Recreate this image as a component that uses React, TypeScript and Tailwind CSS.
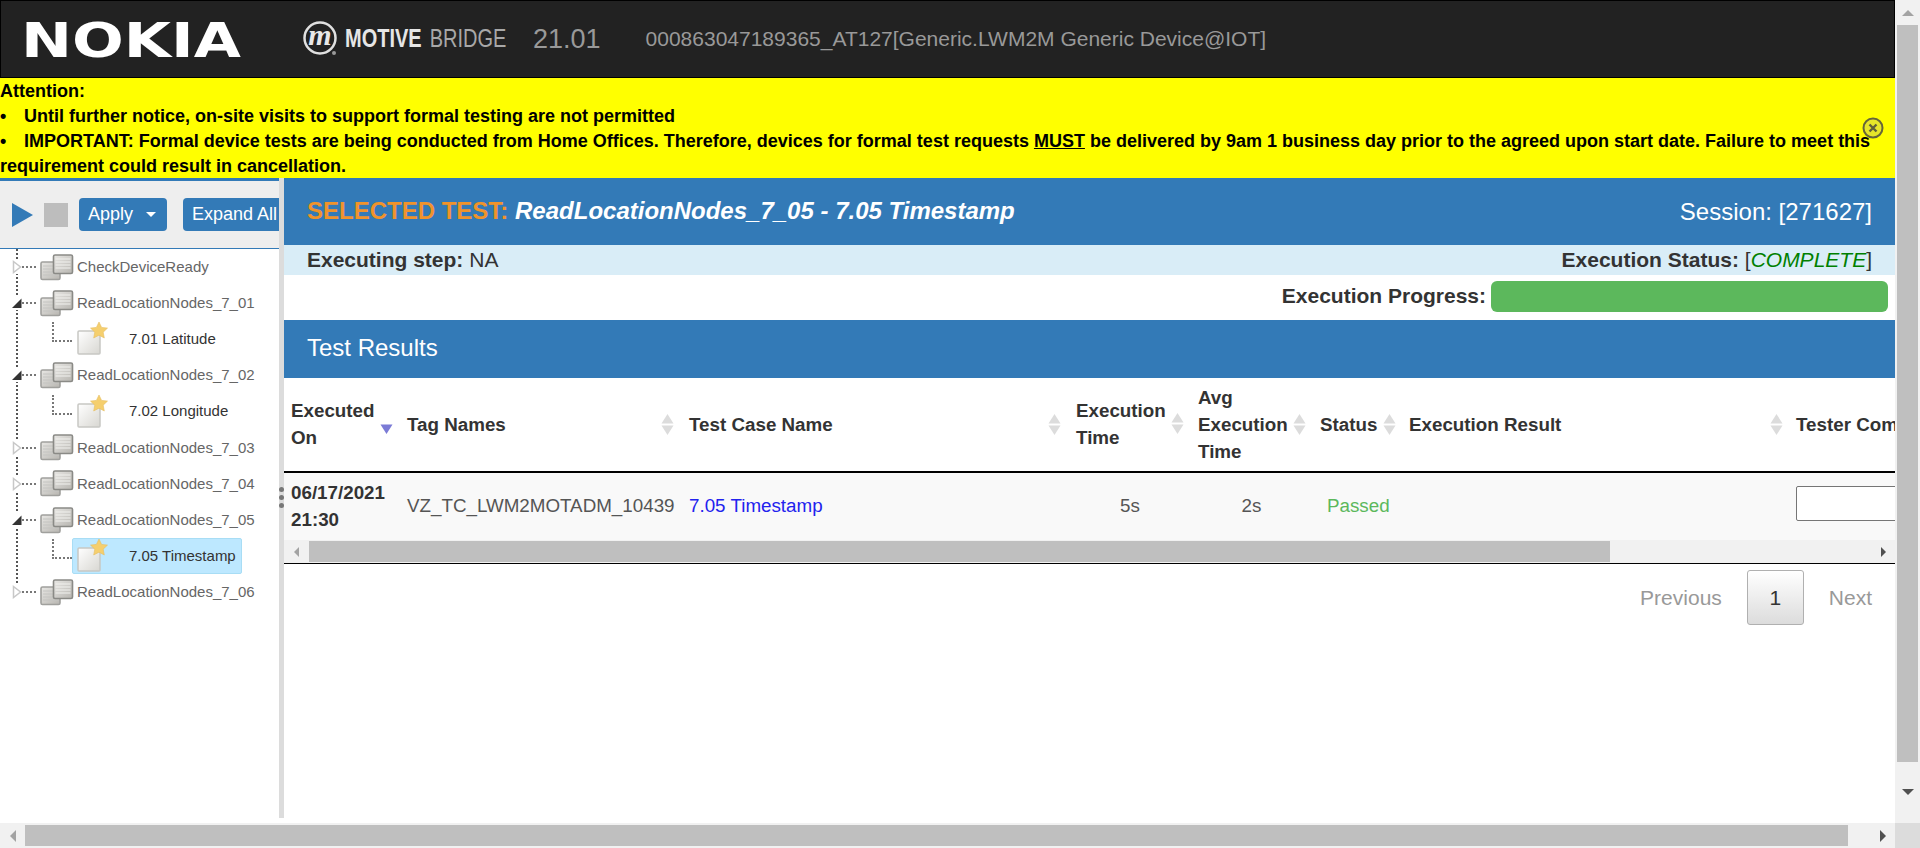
const sans = "font-['Liberation_Sans',Arial,sans-serif]";

function Sort({ active }: { active?: boolean }) {
  return (
    <svg width="13" height="23" viewBox="0 0 13 23" className="shrink-0">
      {!active && <path d="M6.5 1 L12.5 10.5 H0.5 Z" fill="#dcdcdc" />}
      <path d="M0.5 12.5 H12.5 L6.5 22 Z" fill={active ? "#7b7bd6" : "#dcdcdc"} />
    </svg>
  );
}

function FolderIcon() {
  return (
    <svg width="34" height="27" viewBox="0 0 34 27" className="shrink-0">
      <defs>
        <linearGradient id="sheet" x1="0" y1="0" x2="1" y2="1">
          <stop offset="0" stopColor="#e8e7e4" />
          <stop offset="1" stopColor="#b8b6b1" />
        </linearGradient>
      </defs>
      <rect x="1" y="8" width="19" height="17.5" rx="1.5" fill="url(#sheet)" stroke="#a0a09d" strokeWidth="1.6" />
      <path d="M3 12h10M3 15h10M3 18h16M3 21h16" stroke="#c4c4c1" />
      <rect x="13.5" y="1" width="19" height="18.5" rx="1.5" fill="url(#sheet)" stroke="#8a8a86" strokeWidth="1.6" />
      <path d="M15.5 5h15M15.5 8h15M15.5 11h15M15.5 14h15" stroke="#f2f2ef" />
    </svg>
  );
}

function TestIcon() {
  return (
    <svg width="34" height="34" viewBox="0 0 34 34" className="shrink-0">
      <defs>
        <linearGradient id="page" x1="0" y1="0" x2="1" y2="1">
          <stop offset="0" stopColor="#ffffff" />
          <stop offset="1" stopColor="#d8d7d2" />
        </linearGradient>
      </defs>
      <rect x="1" y="9" width="22" height="23" rx="1" fill="url(#page)" stroke="#c8c8c4" strokeWidth="1.5" />
      <path d="M22 0 L24.6 5.4 L30.5 6.1 L26.2 10.2 L27.3 16 L22 13.2 L16.7 16 L17.8 10.2 L13.5 6.1 L19.4 5.4 Z" fill="#f5cf6e" stroke="#e6bd62" strokeWidth="0.6" />
    </svg>
  );
}

function Toggle({ open }: { open: boolean }) {
  return (
    <svg width="10" height="14" viewBox="0 0 10 14" className="shrink-0 bg-white">
      {open ? (
        <path d="M9.5 2.5 V12 H0 Z" fill="#333" />
      ) : (
        <path d="M1.5 1.5 L8.5 7 L1.5 12.5 Z" fill="#fff" stroke="#c8c8c8" strokeWidth="1.5" />
      )}
    </svg>
  );
}

function Group({ name, open }: { name: string; open?: boolean }) {
  return (
    <div className="flex h-[36.15px] items-center">
      <div className="ml-[12px]">
        <Toggle open={!!open} />
      </div>
      <div className="w-[14px] border-t-2 border-dotted border-[#777]" />
      <div className="ml-1">
        <FolderIcon />
      </div>
      <span className="ml-[3px] text-[15px] text-[#666]">{name}</span>
    </div>
  );
}

function Leaf({ name, selected }: { name: string; selected?: boolean }) {
  return (
    <div className="flex h-[36.15px] items-start">
      <div className="ml-[52px] mt-[1px] h-[20px] w-[20px] border-b-2 border-l-2 border-dotted border-[#777]" />
      <div
        className={
          selected
            ? "flex h-9 w-[170px] items-center rounded-[2px] border border-[#a8ddf5] bg-[#bde8ff] pl-[4px]"
            : "flex h-9 w-[170px] items-center border border-transparent pl-[4px]"
        }
      >
        <TestIcon />
        <span className="ml-[18px] text-[15px] text-[#333]">{name}</span>
      </div>
    </div>
  );
}

function Sidebar() {
  return (
    <div className="relative w-[279px] shrink-0 bg-white">
      <div className="flex h-[71px] items-center overflow-hidden border-t-[3px] border-b border-t-[#337ab7] border-b-[#337ab7] bg-[#eeeeee] pl-3">
        <svg width="22" height="24" viewBox="0 0 22 24" className="shrink-0">
          <path d="M0 0 L21 12 L0 24 Z" fill="#337ab7" />
        </svg>
        <div className="ml-[10px] h-6 w-6 shrink-0 bg-[#bdbdbd]" />
        <button className="ml-[11px] flex h-[33px] w-[88px] shrink-0 items-center rounded-[4px] bg-[#337ab7] pl-[9px] text-[18px] text-white">
          Apply
          <span className="ml-[13px] h-0 w-0 border-x-[5px] border-t-[5px] border-x-transparent border-t-white" />
        </button>
        <button className="ml-4 flex h-[33px] w-[110px] shrink-0 items-center rounded-[4px] bg-[#337ab7] pl-[9px] text-[18px] whitespace-nowrap text-white">
          Expand All
        </button>
      </div>
      <div className="relative">
        <div className="absolute top-0 left-[16px] h-[342px] border-l-2 border-dotted border-[#555]" />
        <div className="relative">
          <Group name="CheckDeviceReady" />
          <Group name="ReadLocationNodes_7_01" open />
          <Leaf name="7.01 Latitude" />
          <Group name="ReadLocationNodes_7_02" open />
          <Leaf name="7.02 Longitude" />
          <Group name="ReadLocationNodes_7_03" />
          <Group name="ReadLocationNodes_7_04" />
          <Group name="ReadLocationNodes_7_05" open />
          <Leaf name="7.05 Timestamp" selected />
          <Group name="ReadLocationNodes_7_06" />
        </div>
      </div>
    </div>
  );
}

function Splitter() {
  return (
    <div className="relative mb-[5px] w-[5px] shrink-0 bg-[#dcdcdc]">
      <div className="absolute top-[309px] left-0 flex flex-col gap-[3px]">
        <span className="h-[5px] w-[5px] rounded-full bg-[#777]" />
        <span className="h-[5px] w-[5px] rounded-full bg-[#777]" />
        <span className="h-[5px] w-[5px] rounded-full bg-[#777]" />
      </div>
    </div>
  );
}

function ResultsTable() {
  return (
    <div className="w-full overflow-hidden">
      <div className="flex h-[95px] w-[1750px] items-center border-b-2 border-black text-[18.8px] leading-[27px] font-bold text-[#333]">
        <div className="flex w-[120px] shrink-0 items-center justify-between pr-[11px] pb-[2px] pl-[7px]">
          <span>
            Executed
            <br />
            On
          </span>
          <span className="-mt-[1px]">
            <Sort active />
          </span>
        </div>
        <div className="flex w-[282px] shrink-0 items-center justify-between pr-[12px] pl-[3px]">
          Tag Names
          <Sort />
        </div>
        <div className="flex w-[387px] shrink-0 items-center justify-between pr-[12px] pl-[3px]">
          Test Case Name
          <Sort />
        </div>
        <div className="flex w-[122px] shrink-0 items-center justify-between pr-[11px] pb-[2px] pl-[3px]">
          <span>
            Execution
            <br />
            Time
          </span>
          <Sort />
        </div>
        <div className="flex w-[122px] shrink-0 items-center justify-between pr-[11px] pl-[3px]">
          <span>
            Avg
            <br />
            Execution
            <br />
            Time
          </span>
          <Sort />
        </div>
        <div className="flex w-[89px] shrink-0 items-center justify-between pr-[10px] pl-[3px]">
          Status
          <Sort />
        </div>
        <div className="flex w-[387px] shrink-0 items-center justify-between pr-[10px] pl-[3px]">
          Execution Result
          <Sort />
        </div>
        <div className="pl-[3px] whitespace-nowrap">Tester Comments</div>
      </div>
      <div className="flex h-[67px] w-[1750px] items-center bg-[#f9f9f9] text-[18.8px] text-[#333]">
        <div className="w-[120px] shrink-0 pb-[1px] pl-[7px] leading-[27px] font-bold">
          06/17/2021
          <br />
          21:30
        </div>
        <div className="w-[282px] shrink-0 pl-[3px] whitespace-nowrap text-[#555]">VZ_TC_LWM2MOTADM_10439</div>
        <div className="w-[387px] shrink-0 pl-[3px] text-[#2222ee]">7.05 Timestamp</div>
        <div className="w-[122px] shrink-0 pr-[8px] text-center text-[#555]">5s</div>
        <div className="w-[122px] shrink-0 pr-[9px] text-center text-[#555]">2s</div>
        <div className="w-[89px] shrink-0 pl-[10px] text-[#5cb85c]">Passed</div>
        <div className="w-[390px] shrink-0" />
        <div className="mb-[6px] h-[35px] w-[150px] rounded-[2px] border border-[#767676] bg-white" />
      </div>
      <div className="flex h-[23px] items-center bg-[#f1f1f1]">
        <div className="flex w-[25px] shrink-0 justify-center">
          <span className="h-0 w-0 border-y-[5px] border-r-[5px] border-y-transparent border-r-[#a3a3a3]" />
        </div>
        <div className="h-[21px] w-[1301px] bg-[#bfbfbf]" />
        <div className="flex-1" />
        <div className="flex w-[24px] shrink-0 justify-center">
          <span className="h-0 w-0 border-y-[5px] border-l-[5px] border-y-transparent border-l-[#505050]" />
        </div>
      </div>
      <div className="border-t border-black" />
    </div>
  );
}

function MainPanel() {
  return (
    <div className="min-w-0 flex-1 bg-white">
      <div className="flex h-[67px] items-center justify-between bg-[#337ab7] pr-[23px] pl-[23px] text-white">
        <div className="-mt-[2px] text-[24px] font-bold italic">
          <span className="text-[#f0932b] not-italic">SELECTED TEST:</span> ReadLocationNodes_7_05 - 7.05 Timestamp
        </div>
        <div className="text-[24px]">Session: [271627]</div>
      </div>
      <div className="flex h-[30px] items-center justify-between bg-[#d9edf7] pr-[23px] pl-[23px] text-[21px] text-[#333]">
        <div>
          <b>Executing step:</b> NA
        </div>
        <div>
          <b>Execution Status:</b> [<i className="text-[#008000]">COMPLETE</i>]
        </div>
      </div>
      <div className="flex h-[45px] items-center justify-end gap-[5px] pr-[7px] pb-[3px] text-[21px] font-bold text-[#333]">
        Execution Progress:
        <div className="h-[31px] w-[397px] rounded-[6px] bg-[#5cb85c]" />
      </div>
      <div className="flex h-[58px] items-center bg-[#337ab7] pb-[2px] pl-[23px] text-[24px] text-white">Test Results</div>
      <ResultsTable />
      <div className="mt-[6px] flex items-center justify-end pr-[23px] text-[21px] text-[#999]">
        <span>Previous</span>
        <span className="mx-[25px] flex h-[55px] w-[57px] items-center justify-center rounded-[3px] border border-[#b0b0b0] bg-gradient-to-b from-white to-[#dcdcdc] text-[#333]">
          1
        </span>
        <span>Next</span>
      </div>
    </div>
  );
}

function TopBar() {
  return (
    <div className="flex h-[78px] items-center border border-black bg-[#222222]">
      <div className="ml-[23px] w-[217px] shrink-0">
        <div className="-ml-[3px] mt-[2px] origin-left scale-x-[1.27] font-['DejaVu_Sans',sans-serif] text-[48px] leading-none font-bold whitespace-nowrap text-white">
          NOKIA
        </div>
      </div>
      <svg width="38" height="38" viewBox="0 0 38 38" className="ml-[61px] shrink-0">
        <circle cx="18" cy="18" r="15.5" fill="none" stroke="#e0e0e0" strokeWidth="2.5" />
        <circle cx="32" cy="33" r="2" fill="#999" />
        <text x="18" y="25" textAnchor="middle" fontSize="30" fontStyle="italic" fontWeight="700" fill="#e8e8e8" fontFamily="Liberation Serif">
          m
        </text>
      </svg>
      <div className="ml-[5px] w-[162px] shrink-0">
        <div className="flex w-[210px] origin-left scale-x-[0.8] items-center text-[25px] whitespace-nowrap">
          <span className="font-bold text-[#e6e6e6]">MOTIVE</span>
          <span className="ml-[10px] text-[#a8a8a8]">BRIDGE</span>
        </div>
      </div>
      <span className="ml-[26px] text-[27px] text-[#999]">21.01</span>
      <span className="ml-[45px] text-[21px] whitespace-nowrap text-[#999]">000863047189365_AT127[Generic.LWM2M Generic Device@IOT]</span>
    </div>
  );
}

function Notice() {
  return (
    <div className="relative h-[100px] overflow-hidden bg-[#ffff00] pt-[0.5px] text-[18px] leading-[25px] font-bold text-black">
      <div>Attention:</div>
      <div className="flex">
        <span className="w-[24px] shrink-0">•</span>
        <span>Until further notice, on-site visits to support formal testing are not permitted</span>
      </div>
      <div className="pr-[10px]">
        <span className="inline-block w-[24px]">•</span>
        IMPORTANT: Formal device tests are being conducted from Home Offices. Therefore, devices for formal test requests <u>MUST</u> be delivered by 9am 1 business day prior to the agreed upon start date. Failure to meet this requirement could result in cancellation.
      </div>
      <svg width="22" height="22" viewBox="0 0 22 22" className="absolute top-[39px] right-[11px]">
        <circle cx="11" cy="11" r="9.5" fill="#e6e62a" stroke="#66663a" strokeWidth="2" />
        <path d="M7.5 7.5 L14.5 14.5 M14.5 7.5 L7.5 14.5" stroke="#5f5f3a" strokeWidth="2.4" />
      </svg>
    </div>
  );
}

export default function App() {
  return (
    <div className={`flex h-[848px] w-[1920px] flex-col overflow-hidden bg-white ${sans}`}>
      <div className="flex h-[823px] shrink-0">
        <div className="min-w-0 flex-1 overflow-hidden">
          <TopBar />
          <Notice />
          <div className="flex h-[645px]">
            <Sidebar />
            <Splitter />
            <MainPanel />
          </div>
        </div>
        <div className="flex w-[25px] shrink-0 flex-col items-center bg-[#f1f1f1]">
          <div className="flex h-[25px] shrink-0 items-center justify-center">
            <span className="h-0 w-0 border-x-[6px] border-b-[6px] border-x-transparent border-b-[#a3a3a3]" />
          </div>
          <div className="h-[737px] w-[21px] bg-[#bfbfbf]" />
          <div className="flex flex-1 items-center justify-center pb-[2px]">
            <span className="h-0 w-0 border-x-[6px] border-t-[6px] border-x-transparent border-t-[#505050]" />
          </div>
        </div>
      </div>
      <div className="flex h-[25px] shrink-0">
        <div className="flex min-w-0 flex-1 items-center bg-[#f1f1f1]">
          <div className="flex w-[25px] shrink-0 justify-center">
            <span className="h-0 w-0 border-y-[6px] border-r-[6px] border-y-transparent border-r-[#a3a3a3]" />
          </div>
          <div className="h-[21px] w-[1823px] bg-[#bfbfbf]" />
          <div className="flex flex-1 justify-end pr-[9px]">
            <span className="h-0 w-0 border-y-[6px] border-l-[6px] border-y-transparent border-l-[#505050]" />
          </div>
        </div>
        <div className="w-[25px] shrink-0 bg-[#dcdcdc]" />
      </div>
    </div>
  );
}
